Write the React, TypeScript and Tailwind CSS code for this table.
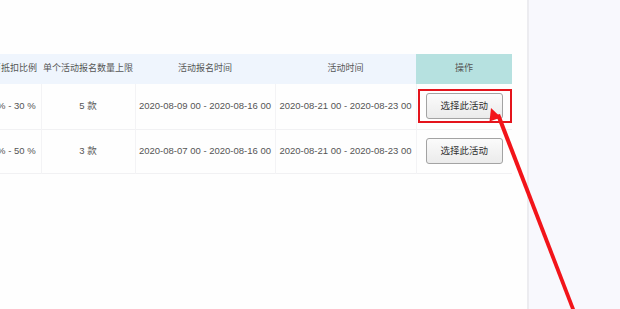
import React from "react";

type Row = {
  ratio: string;
  limit: string;
  signup: string;
  period: string;
};

const rows: Row[] = [
  {
    ratio: "10 % - 30 %",
    limit: "5 款",
    signup: "2020-08-09 00 - 2020-08-16 00",
    period: "2020-08-21 00 - 2020-08-23 00",
  },
  {
    ratio: "20 % - 50 %",
    limit: "3 款",
    signup: "2020-08-07 00 - 2020-08-16 00",
    period: "2020-08-21 00 - 2020-08-23 00",
  },
];

const font = { fontFamily: '"Liberation Sans", "Noto Sans CJK SC", sans-serif' };

export default function App() {
  return (
    <div className="relative flex h-[309px] w-[620px] overflow-hidden bg-white" style={font}>
      {/* main content */}
      <div className="w-[527px] shrink-0 overflow-hidden bg-[#fefefe] pt-[54px]">
        <table className="ml-[-21px] w-[533px] table-fixed border-collapse text-[#555]">
          <colgroup>
            <col className="w-[62px]" />
            <col className="w-[94px]" />
            <col className="w-[140px]" />
            <col className="w-[141px]" />
            <col className="w-[96px]" />
          </colgroup>
          <thead>
            <tr className="h-[30px] text-[9px]">
              <th className="bg-[#eff5fd] font-normal whitespace-nowrap">金币抵扣比例</th>
              <th className="bg-[#eff5fd] font-normal whitespace-nowrap">单个活动报名数量上限</th>
              <th className="bg-[#eff5fd] font-normal">活动报名时间</th>
              <th className="bg-[#eff5fd] font-normal">活动时间</th>
              <th className="bg-[#b6e1e0] font-normal">操作</th>
            </tr>
          </thead>
          <tbody className="text-[9.5px]">
            {rows.map((r, i) => (
              <tr key={i} className={`${i === 0 ? "h-[45px]" : "h-[44px]"} border-b border-[#f1f1f3]`}>
                <td className="border-r border-[#f3f3f5] text-center whitespace-nowrap">{r.ratio}</td>
                <td className="border-r border-[#f3f3f5] text-center">{r.limit}</td>
                <td className="border-r border-[#f3f3f5] text-center whitespace-nowrap">{r.signup}</td>
                <td className="border-r border-[#f3f3f5] text-center whitespace-nowrap">{r.period}</td>
                <td className="relative text-center">
                  {i === 0 && (
                    <div className="absolute top-[5px] bottom-[6px] left-px right-0 border-2 border-[#e4141c]" />
                  )}
                  <button className="h-[26px] w-[77px] rounded-[3px] border border-[#a3a3a3] bg-gradient-to-b from-[#fbfbfb] to-[#ebebeb] text-[9.5px] text-[#333]">
                    选择此活动
                  </button>
                </td>
              </tr>
            ))}
          </tbody>
        </table>
      </div>
      <div className="w-[2px] shrink-0 bg-[#ececf0]" />
      <div className="flex-1 bg-[#f8f8fd]" />

      {/* annotation arrow */}
      <svg className="pointer-events-none absolute inset-0" width="620" height="309" viewBox="0 0 620 309">
        <polygon points="496,115 500,114 575,309 571,309" fill="#f2141a" />
        <polygon points="491,108 501,117.5 489.5,121.5" fill="#f2141a" />
      </svg>
    </div>
  );
}
